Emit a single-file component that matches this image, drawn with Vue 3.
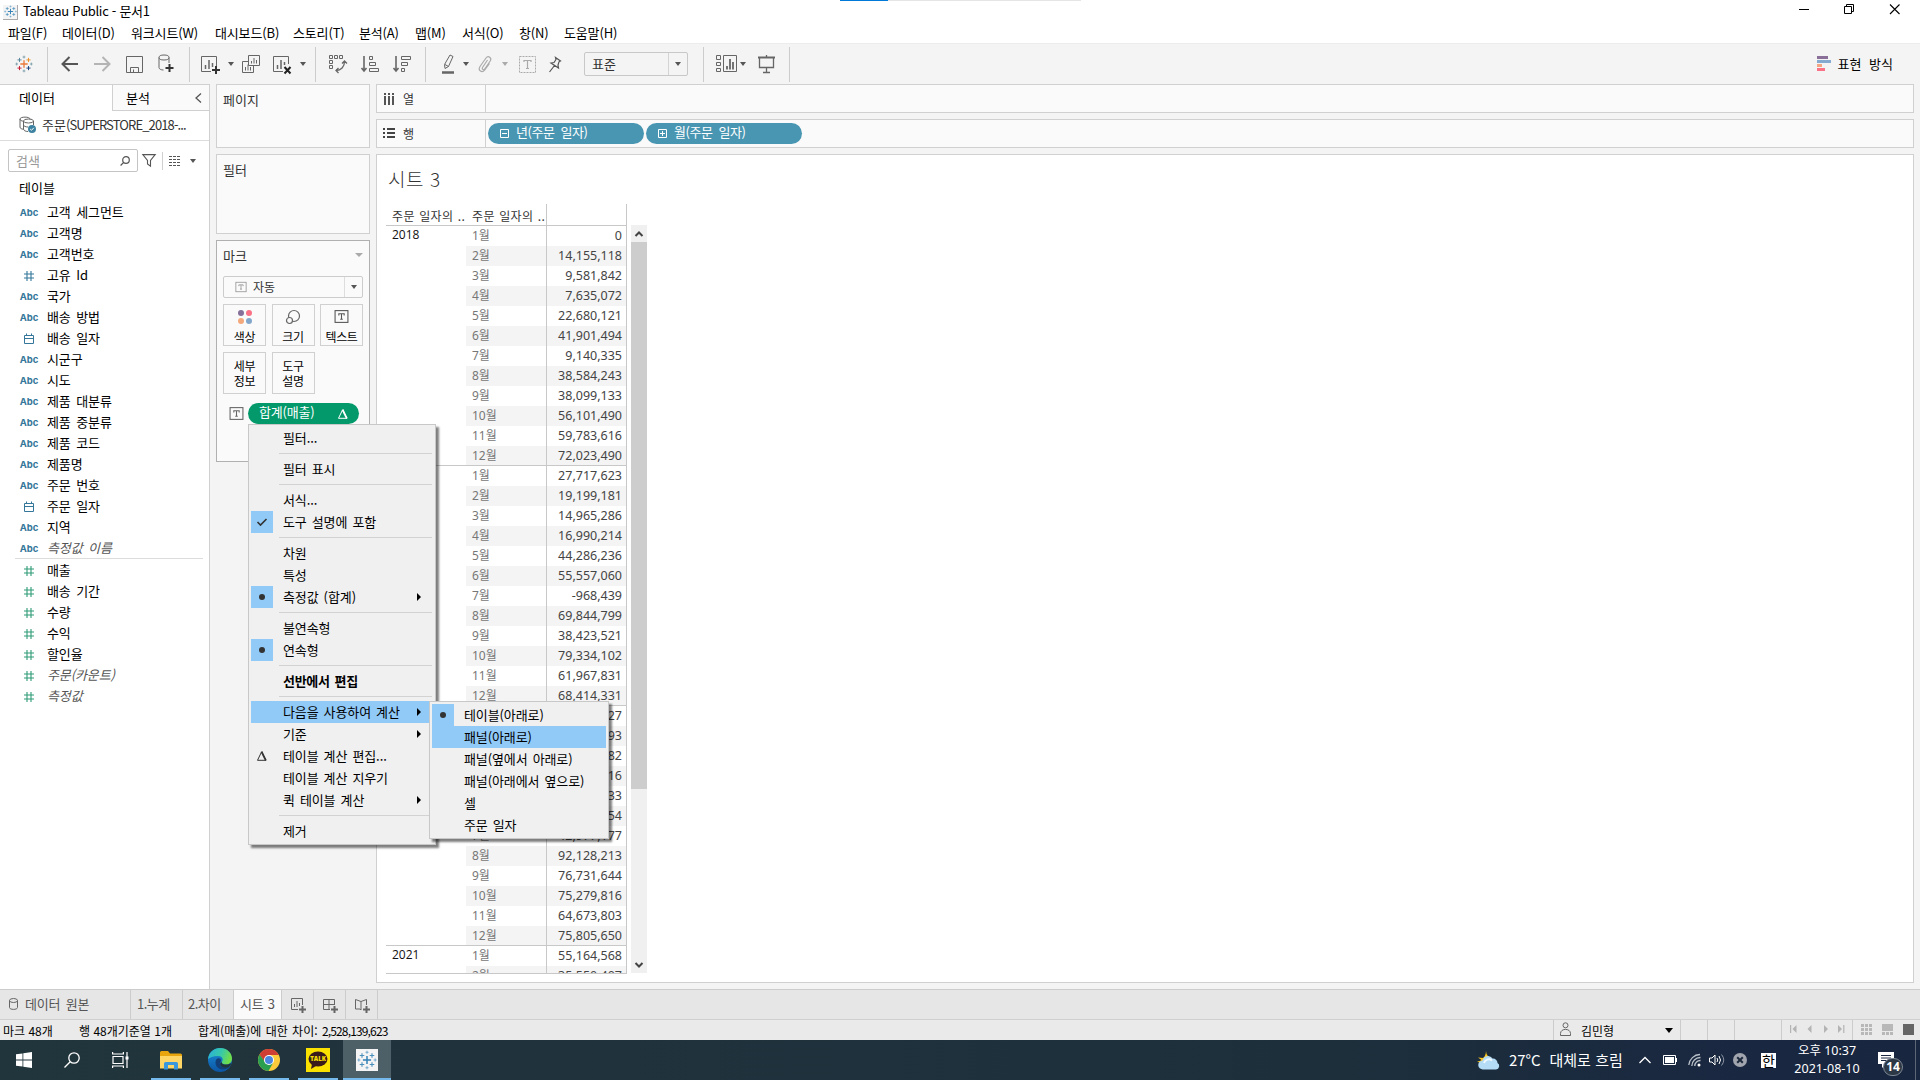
<script setup>
const menus = [
  ['파일(F)', 54], ['데이터(D)', 69], ['워크시트(W)', 84], ['대시보드(B)', 78], ['스토리(T)', 66],
  ['분석(A)', 56], ['맵(M)', 47], ['서식(O)', 57], ['창(N)', 45], ['도움말(H)', 70],
]

const dimensions = [
  ['abc', '고객 세그먼트'], ['abc', '고객명'], ['abc', '고객번호'], ['num', '고유 Id'], ['abc', '국가'],
  ['abc', '배송 방법'], ['date', '배송 일자'], ['abc', '시군구'], ['abc', '시도'], ['abc', '제품 대분류'],
  ['abc', '제품 중분류'], ['abc', '제품 코드'], ['abc', '제품명'], ['abc', '주문 번호'], ['date', '주문 일자'],
  ['abc', '지역'], ['abc', '측정값 이름', true],
]
const measures = [
  ['num', '매출'], ['num', '배송 기간'], ['num', '수량'], ['num', '수익'], ['num', '할인율'],
  ['num', '주문(카운트)', true], ['num', '측정값', true],
]

const years = [
  { year: '2018', values: ['0', '14,155,118', '9,581,842', '7,635,072', '22,680,121', '41,901,494', '9,140,335', '38,584,243', '38,099,133', '56,101,490', '59,783,616', '72,023,490'] },
  { year: '2019', values: ['27,717,623', '19,199,181', '14,965,286', '16,990,214', '44,286,236', '55,557,060', '-968,439', '69,844,799', '38,423,521', '79,334,102', '61,967,831', '68,414,331'] },
  { year: '2020', values: ['42,318,127', '37,204,593', '40,115,682', '39,870,416', '68,219,233', '81,403,954', '42,977,177', '92,128,213', '76,731,644', '75,279,816', '64,673,803', '75,805,650'] },
  { year: '2021', values: ['55,164,568', '35,550,407'] },
]

const menuItems = [
  { t: '필터...' }, { sep: 1 },
  { t: '필터 표시' }, { sep: 1 },
  { t: '서식...' }, { t: '도구 설명에 포함', mark: 'check' }, { sep: 1 },
  { t: '차원' }, { t: '특성' }, { t: '측정값 (합계)', mark: 'dot', sub: 1 }, { sep: 1 },
  { t: '불연속형' }, { t: '연속형', mark: 'dot' }, { sep: 1 },
  { t: '선반에서 편집', bold: 1 }, { sep: 1 },
  { t: '다음을 사용하여 계산', sub: 1, on: 1 }, { t: '기준', sub: 1 },
  { t: '테이블 계산 편집...', mark: 'delta' }, { t: '테이블 계산 지우기' }, { t: '퀵 테이블 계산', sub: 1 }, { sep: 1 },
  { t: '제거' },
]
const subItems = [
  { t: '테이블(아래로)', mark: 'dot' }, { t: '패널(아래로)', on: 1 }, { t: '패널(옆에서 아래로)' },
  { t: '패널(아래에서 옆으로)' }, { t: '셀' }, { t: '주문 일자' },
]
</script>

<template>
  <div class="app" lang="ko">
    <svg width="0" height="0" class="defs">
      <symbol id="tableau" viewBox="0 0 22 22">
        <path d="M11 6.5v9M6.5 11h9" stroke="var(--a)" stroke-width="1.6" />
        <path d="M5.5 3.5v5M3 6h5" stroke="var(--b)" stroke-width="1.2" />
        <path d="M16.500 3.500v5M14 6h5" stroke="var(--c)" stroke-width="1.2" />
        <path d="M5.500 13.500v5M3 16h5" stroke="var(--d)" stroke-width="1.2" />
        <path d="M16.500 13.500v5M14 16h5" stroke="var(--e)" stroke-width="1.2" />
        <path d="M11 .8v3.400M9.300 2.500h3.400M11 17.800v3.400M9.300 19.500h3.400M2 9.300v3.400M.5 11h3.200M20 9.300v3.400M18.300 11h3.200" stroke="var(--f)" stroke-width="1" />
      </symbol>
      <symbol id="tbox" viewBox="0 0 14 14">
        <rect x="1" y="1.500" width="12" height="11" fill="none" stroke="currentColor" />
        <path d="M4.500 6V4.500h5V6M7 4.500v5M5.800 9.500h2.400" fill="none" stroke="currentColor" />
      </symbol>
      <symbol id="delta" viewBox="0 0 12 12">
        <path d="M5.500 2L1.500 10.300h8.500z" fill="none" stroke="currentColor" stroke-width="1" /><path d="M5.500 1.500l4.300 8.800" fill="none" stroke="currentColor" stroke-width="1.800" />
      </symbol>
      <symbol id="num" viewBox="0 0 12 12"><path d="M4 1v10M8 1v10M1 4h10M1 8h10" stroke="currentColor" stroke-width="1.100" /></symbol>
      <symbol id="date" viewBox="0 0 12 12"><path d="M1.500 2.500h9v8h-9zM1.500 5.500h9M3.500 .5v2M8.500 .5v2" fill="none" stroke="currentColor" /></symbol>
    </svg>

    <header class="titlebar">
      <span class="progress"><i></i></span>
      <span class="logo-box"><svg class="mono" width="13" height="13"><use href="#tableau" /></svg></span>
      <span class="title">Tableau Public - 문서1</span>
      <svg class="winbtns" width="104" height="14" fill="none" stroke="#000">
        <path d="M1 6.500h10" /><path d="M46.500 3.500h7v7h-7zM48.500 3.500v-2h7v7h-2" /><path d="M92 1.500l9.500 9.500M101.500 1.500L92 11" stroke-width="1.100" />
      </svg>
    </header>
    <nav class="menubar"><span v-for="m in menus" :key="m[0]" :style="{ width: m[1] + 'px' }">{{ m[0] }}</span></nav>

    <div class="toolbar">
      <div class="grp g1"><svg class="color" width="18" height="18"><use href="#tableau" /></svg></div>
      <div class="grp g2">
        <b><svg width="18" height="16" fill="none" stroke="#555" stroke-width="2"><path d="M17 8H2M8.500 1L1.500 8l7 7" /></svg></b>
        <b><svg width="18" height="16" fill="none" stroke="#b4b4b4" stroke-width="2"><path d="M1 8h15M9.500 1l7 7-7 7" /></svg></b>
        <b><svg width="17" height="17" fill="none" stroke="#666"><path d="M.5.5h16v16H.5z" /><path d="M4.500 16.500v-5h8v5M7.500 13.500v3" /></svg></b>
        <b><svg width="16" height="20" fill="none" stroke="#666"><ellipse cx="6" cy="3.500" rx="5" ry="2.500" /><path d="M1 3.500v10c0 1.500 2 2.500 4.500 2.500M11 3.500V9" /><path d="M11.500 10v8M7.500 14h8" stroke="#333" stroke-width="2" /></svg></b>
      </div>
      <div class="grp g3">
        <b><svg width="20" height="19" fill="none" stroke="#666"><path d="M10 16.500H.5V1.500h15V11" /><path d="M4.500 14V10M8 14V5M11.500 12V8" stroke-width="1.500" /><path d="M15 11v8M11 15h8" stroke="#333" stroke-width="2" /></svg></b>
        <em></em>
        <b><svg width="18" height="18" fill="none" stroke="#666"><path d="M6.500.5h11v10h-11zM6 6.500H.5v11h11V11" /><path d="M9.500 8.500V6M12 8.500V3M14.500 8.500V5M3.500 15.500V12M6 15.500V9.500M8.500 15.500V12" /></svg></b>
        <b><svg width="20" height="19" fill="none" stroke="#666"><path d="M10 16.500H.5V1.500h15V9" /><path d="M4.500 14V10M8 14V5M11.500 10V7" stroke-width="1.500" /><path d="M11.500 12l6 6.500M17.500 12l-6 6.500" stroke="#222" stroke-width="2" /></svg></b>
        <em></em>
      </div>
      <div class="grp g4">
        <b><svg width="18" height="18" fill="none" stroke="#666"><path d="M.5.500h3v3h-3zM5.500.500h3v3h-3zM10.500.500h3v3h-3zM.5 5.500h3v3h-3zM.5 10.500h3v3h-3z" /><path d="M7 15.500C12 15.500 15.500 12 15.500 6.500M9.500 13L7 15.500 9.500 18M13 8.500l2.500-2.500L18 8.500" stroke-width="1.300" /></svg></b>
        <b><svg width="19" height="18" fill="none" stroke="#666"><path d="M3 1v15M.5 13L3 16l2.500-3" stroke-width="1.600" /><path d="M8.500 1.500h3v3h-3zM8.500 7.500h6v3h-6zM8.500 13.500h9v3h-9z" /></svg></b>
        <b><svg width="19" height="18" fill="none" stroke="#666"><path d="M3 1v15M.5 13L3 16l2.500-3" stroke-width="1.600" /><path d="M8.500 1.500h9v3h-9zM8.500 7.500h6v3h-6zM8.500 13.500h3v3h-3z" /></svg></b>
      </div>
      <div class="grp g5">
        <b><svg width="14" height="20" fill="none" stroke="#666"><path d="M9 1l3 1.500-4.500 10-3.500 2-.5-4z M4 10.500l3.500 2" /><path d="M1 18.500h12" stroke-width="2.500" /></svg></b>
        <em></em>
        <b><svg width="14" height="18" fill="none" stroke="#aaa" stroke-width="1.200"><path d="M9.500 5l-5 7.500c-1 1.700 1.200 3 2.200 1.500l5.500-8c2-3.200-2-6-4.200-3L2 11.500C-.5 15.500 4 18.500 6.800 15l4.700-6.500" /></svg></b>
        <em class="off"></em>
        <b><svg width="17" height="17" fill="none" stroke="#aaa"><path d="M.5.500h16v16H.5z" stroke-dasharray="2 1" /><path d="M5 6V4.500h7V6M8.500 4.500v8M7 12.500h3" stroke-width="1.200" /></svg></b>
        <b><svg width="14" height="17" fill="none" stroke="#555" stroke-width="1.200"><path d="M7.500 1.500l5 3.500-1.500.8L10 9l.5 3L3 7l3-.5 2-3zM6.500 9.500L1.500 16" /></svg></b>
        <div class="fit"><span>표준</span><i><em></em></i></div>
      </div>
      <div class="grp g6">
        <b><svg width="21" height="18" fill="none" stroke="#666"><path d="M.5.500h4v4h-4zM.5 7.500h4v3h-4zM.5 13.500h4v3h-4zM7.500.500h13v16h-13z" /><path d="M11 14.500V11M14 14.500V4M17 14.500V7" stroke-width="1.800" /></svg></b>
        <em></em>
        <b><svg width="17" height="19" fill="none" stroke="#666"><path d="M0 2.500h17" stroke-width="2" /><path d="M1.500 3v9.500h14V3M8.500 0v2M8.500 12.500v5M5 17.500h7" stroke-width="1.300" /></svg></b>
      </div>
      <div class="showme">
        <svg width="14" height="15"><path fill="#8a6f98" d="M0 0h11v3H0z" /><path fill="#85a9cf" d="M0 4h14v3H0z" /><path fill="#f4a582" d="M0 8h5v3H0z" /><path fill="#fb7185" d="M0 12h8v3H0z" /></svg>
        <span>표현 방식</span>
      </div>
    </div>

    <main class="work">
      <aside class="side">
        <div class="side-tabs"><span class="t1">데이터</span><span class="t2">분석<svg width="7" height="10" fill="none" stroke="#555" stroke-width="1.300"><path d="M6 .5L1 5l5 4.500" /></svg></span></div>
        <div class="source">
          <svg width="18" height="18" fill="none" stroke="#666"><path d="M11 3C11 .5 1 .5 1 3v8c0 1.500 1.500 2 3 2.200M1 3c0 1.500 1.500 2 3.500 2.200" /><ellipse cx="9.500" cy="5" rx="5" ry="2" /><path d="M4.500 5v8c0 1.500 2 2.500 4.500 2.500M14.500 5v4M4.500 9c0 1 2 2 4.500 2" /><circle cx="13" cy="13" r="4" fill="#3d82a0" stroke="none" /><path d="M11.200 13l1.300 1.300 2.300-2.500" stroke="#fff" /></svg>
          <span>주문<u>(SUPERSTORE_2018-...</u></span>
        </div>
        <div class="search">
          <div class="box"><span>검색</span><svg width="10" height="10" fill="none" stroke="#555" stroke-width="1.200"><circle cx="6" cy="4" r="3.300" /><path d="M3.700 6.300L.6 9.500" /></svg></div>
          <svg class="funnel" width="14" height="13" fill="none" stroke="#555" stroke-width="1.100"><path d="M.8.600h12.400L8.500 6.500v5.700L5.500 10V6.500z" /></svg>
          <i></i>
          <svg width="12" height="10" stroke="#555" stroke-dasharray="3 1"><path d="M0 .5h12M0 3.500h12M0 6.500h12M0 9.500h12" /></svg>
          <em></em>
        </div>
        <div class="tables-h">테이블</div>
        <ul class="fields dims">
          <li v-for="f in dimensions" :key="f[1]"><span class="ic"><template v-if="f[0] === 'abc'">Abc</template><svg v-else width="12" height="12"><use :href="'#' + f[0]" /></svg></span><span :class="{ it: f[2] }">{{ f[1] }}</span></li>
        </ul>
        <ul class="fields meas">
          <li v-for="f in measures" :key="f[1]"><span class="ic"><svg width="12" height="12"><use :href="'#' + f[0]" /></svg></span><span :class="{ it: f[2] }">{{ f[1] }}</span></li>
        </ul>
      </aside>

      <section class="cards">
        <div class="card pages">페이지</div>
        <div class="card filters">필터</div>
        <div class="card marks">
          <div class="mh"><span>마크</span><em></em></div>
          <div class="mtype"><svg width="12" height="12" color="#999"><use href="#tbox" /></svg><span>자동</span><i><em></em></i></div>
          <div class="mgrid">
            <div><svg width="16" height="16"><circle cx="4" cy="4" r="3" fill="#86709a" /><circle cx="12" cy="4" r="3" fill="#fb7185" /><circle cx="4" cy="12" r="3" fill="#f4a97d" /><circle cx="12" cy="12" r="3" fill="#83a6cb" /></svg><span>색상</span></div>
            <div><svg width="16" height="16" fill="none" stroke="#666" stroke-width="1.200"><circle cx="9" cy="7" r="5.500" /><circle cx="4.500" cy="11.500" r="3" fill="#fafafa" /></svg><span>크기</span></div>
            <div><svg width="15" height="15" color="#555"><use href="#tbox" /></svg><span>텍스트</span></div>
            <div class="two"><span>세부<br>정보</span></div>
            <div class="two"><span>도구<br>설명</span></div>
          </div>
          <div class="mpill"><svg width="15" height="15" color="#666"><use href="#tbox" /></svg><div class="pill green"><span>합계(매출)</span><svg width="12" height="12"><use href="#delta" /></svg></div></div>
        </div>
      </section>

      <section class="view">
        <div class="shelf"><div class="sl"><svg width="12" height="13" stroke="#555" stroke-width="2"><path d="M2 1v2M2 4v9M6 1v2M6 4v9M10 1v2M10 4v9" /></svg>열</div></div>
        <div class="shelf"><div class="sl"><svg width="12" height="11" stroke="#444" stroke-width="2"><path d="M0 1h2M0 5h2M0 9h2M4 1h8M4 5h8M4 9h8" /></svg>행</div>
          <div class="pill blue"><svg width="9" height="9" fill="none" stroke="#fff"><path d="M.5.500h8v8h-8zM2 4.500h5" /></svg><span>년(주문 일자)</span></div>
          <div class="pill blue"><svg width="9" height="9" fill="none" stroke="#fff"><path d="M.5.500h8v8h-8zM2 4.500h5M4.500 2v5" /></svg><span>월(주문 일자)</span></div>
        </div>
        <div class="sheet">
          <h1>시트 3</h1>
          <div class="viz">
            <div class="table">
              <div class="thead"><span class="y">주문 일자의 ..</span><span class="m">주문 일자의 ..</span><span class="v"></span></div>
              <div class="tbody">
                <div v-for="y in years" :key="y.year" class="yr">
                  <div class="y">{{ y.year }}</div>
                  <div class="rows"><div v-for="(v, i) in y.values" :key="i" class="row"><span class="m">{{ i + 1 }}월</span><span class="v">{{ v }}</span></div></div>
                </div>
              </div>
            </div>
            <div class="scroll">
              <span><svg width="8" height="6" fill="none" stroke="#444" stroke-width="2"><path d="M.5 5L4 1.500 7.500 5" /></svg></span>
              <i></i>
              <span class="dn"><svg width="8" height="6" fill="none" stroke="#444" stroke-width="2"><path d="M.5 1L4 4.500 7.500 1" /></svg></span>
            </div>
          </div>
        </div>
      </section>
    </main>

    <div class="tabs">
      <div class="tab src"><svg width="9" height="12" fill="none" stroke="#666"><ellipse cx="4.500" cy="2.500" rx="4" ry="2" /><path d="M.5 2.500v7c0 2.500 8 2.500 8 0v-7" /></svg><span>데이터 원본</span></div>
      <div class="tab n1">1.누계</div><div class="tab n2">2.차이</div><div class="tab cur">시트 3</div>
      <div class="tab add"><svg width="16" height="16" fill="none" stroke="#666"><path d="M7 11.500H.5V.5h11V7M3.500 9V6M6 9V3M8.500 8V5" /><path d="M11.500 8v7M8 11.500h7" stroke-width="2" /></svg></div>
      <div class="tab add"><svg width="16" height="16" fill="none" stroke="#666"><path d="M7 11.500H.5V1.500h11V7M.5 6.500h11M6 1.500v10" /><path d="M11.500 8v7M8 11.500h7" stroke-width="2" /></svg></div>
      <div class="tab add"><svg width="16" height="16" fill="none" stroke="#666"><path d="M6 12l-1-1H.5V1.500L6 3.500l5.500-2V7M6 3.500V12" /><path d="M11.500 8v7M8 11.500h7" stroke-width="2" /></svg></div>
    </div>

    <div class="status">
      <span class="s1">마크 48개</span><span class="s2">행 48개기준열 1개</span><span class="s3">합계(매출)에 대한 차이: <u>2,528,139,623</u></span>
      <div class="cell user"><svg width="11" height="14" fill="none" stroke="#666"><circle cx="5.500" cy="3.300" r="2.500" /><path d="M.5 13.500v-2c0-5.500 10-5.500 10 0v2z" /></svg><span>김민형</span><em></em></div>
      <div class="cell e1"></div><div class="cell e1"></div><div class="cell e2"></div>
      <div class="cell nav"><svg width="56" height="8" fill="#b4b4b4"><path d="M0 0h1.200v8H0zM6.500 0v8l-4-4zM21.500 0v8l-4-4zM34 0v8l4-4zM48 0v8l4-4zM53.200 0h1.200v8h-1.200z" /></svg></div>
      <div class="cell views"><svg width="54" height="11"><path d="M0 0h3v3H0zM4 0h3v3H4zM8 0h3v3H8zM0 4h3v3H0zM4 4h3v3H4zM8 4h3v3H8zM0 8h3v3H0zM4 8h3v3H4zM8 8h3v3H8zM21 0h11v7H21zM21 8h3v3h-3zM25 8h3v3h-3zM29 8h3v3h-3z" fill="#b8b8b8" /><path d="M42 0h11v11H42z" fill="#666" /></svg></div>
    </div>

    <footer class="taskbar">
      <div class="tk"><svg width="16" height="16" fill="#fff"><path d="M0 2.300l6.500-.9v6.200H0zM7.300 1.200L16 0v7.600H7.300zM0 8.400h6.500v6.200L0 13.700zM7.300 8.400H16V16l-8.700-1.200z" /></svg></div>
      <div class="tk"><svg width="16" height="16" fill="none" stroke="#fff" stroke-width="1.300"><circle cx="10" cy="6" r="5.200" /><path d="M6.200 9.800L.5 15.500" /></svg></div>
      <div class="tk"><svg width="17" height="16" fill="none" stroke="#fff" stroke-width="1.200"><path d="M1 4.500h10v7H1zM.6 0v2h10.800V0M.6 16v-2h10.800v2M15 0v16" /><path d="M13.500 4.500h3v3h-3z" fill="#fff" stroke="none" /></svg></div>
      <div class="tk run first"><svg width="22" height="19"><path d="M0 1.500Q0 0 1.500 0H8l2 2.500h10.500Q22 2.500 22 4v12H0z" fill="#e9a50e" /><path d="M0 5h22v12.500H0z" fill="#ffd666" /><path d="M4 18.500v-6Q4 11 5.500 11h11q1.500 0 1.500 1.500v6h-4V14H8v4.500z" fill="#3b97dc" /></svg></div>
      <div class="tk run"><svg width="24" height="24"><defs><linearGradient id="eg" x1="0" y1="0" x2="1" y2=".3"><stop offset="0" stop-color="#28afdc" /><stop offset=".6" stop-color="#38c9a8" /><stop offset="1" stop-color="#6fdc4c" /></linearGradient><linearGradient id="eb" x1="0" y1="0" x2="0" y2="1"><stop offset="0" stop-color="#1b8fd8" /><stop offset="1" stop-color="#0b55a4" /></linearGradient></defs><circle cx="12" cy="12" r="12" fill="url(#eb)" /><path d="M0 11C1 4 6 0 12 0c7 0 12 5 12 10.500 0 4-3 6-6 6-3.500 0-5-1.500-4-3 1.500-2 .5-5.500-4-5.500C5 8 1.500 9.500 0 11z" fill="url(#eg)" /><path d="M8 12c-2 5 2 9.500 7 9.500 3 0 5-1 7-3-3 2-7 1.500-9-.5-1.700-1.700-1.500-3 0-5 .500-3-3.500-4-5-1z" fill="#123f78" /><path d="M14 13.500c-1 1.500.5 3 4 3 1.500 0 3.500-.5 4.500-1.500l.5 2-2.500 2.300c-3 1.200-6 .2-7.500-1.300-1.500-1.700-1-3.500 1-4.500z" fill="#21343c" /></svg></div>
      <div class="tk run"><svg width="22" height="22"><circle cx="11" cy="11" r="11" fill="#fbcb3c" /><path d="M11 6h9.800A11 11 0 0 0 1.500 5.500L6.500 13z" fill="#cf3e35" /><path d="M1.500 5.500A11 11 0 0 0 10.500 22L15 14 7 13z" fill="#2a9f50" /><circle cx="11" cy="11" r="5" fill="#fff" /><circle cx="11" cy="11" r="4" fill="#4a86e0" /></svg></div>
      <div class="tk run"><span class="kakao"><svg width="24" height="24"><ellipse cx="12" cy="11" rx="9.500" ry="7.500" fill="#391b1b" /><path d="M6 16l-1 5 5-3z" fill="#391b1b" /></svg><b>TALK</b></span></div>
      <div class="tk run active"><span class="tbl"><svg class="mono" width="20" height="20"><use href="#tableau" /></svg></span></div>
      <div class="tray">
        <svg class="wx" width="23" height="19"><path d="M9 0a7.500 7.500 0 0 0 6 7L8 14 0 10.500c2-.2 3.500-.8 4.500-1.500L1 6.500l5 .5Q9 4.500 9 0z" fill="#ffc61a" /><path d="M6 18.500a4.500 4.500 0 0 1-.500-9 5.500 5.500 0 0 1 10-2 4.500 4.500 0 0 1 5 4.500 3.500 3.500 0 0 1-1.500 6.500z" fill="#b5dcf7" /><path d="M7 12a5 5 0 0 1 8-2.500" stroke="#eef8ff" fill="none" stroke-width="2" /></svg>
        <span class="wt">27°C&nbsp; 대체로 흐림</span>
        <svg class="ch" width="12" height="8" fill="none" stroke="#fff" stroke-width="1.300"><path d="M.5 7L6 1.500 11.500 7" /></svg>
        <svg class="bt" width="15" height="10" fill="none" stroke="#fff"><path d="M.5.500h12v9H.5zM13.500 3v4" /><path d="M2 2h9v6H2z" fill="#fff" stroke="none" /></svg>
        <svg class="wf" width="13" height="14" fill="none" stroke="#b9c0c9" stroke-width="1.300"><path d="M.8 12A11.500 11.500 0 0 1 12 1.500M3.800 13A8.500 8.500 0 0 1 12.500 4.500M6.800 13A5.500 5.500 0 0 1 12.500 7.500" /><circle cx="11" cy="12" r="1.500" fill="#fff" stroke="none" /></svg>
        <svg class="vo" width="16" height="14" fill="none" stroke="#fff"><path d="M.5 5h2.500l3-3v10L3 9H.5zM8 5q1.500 2 0 4M10 3q3 4 0 8" /><path d="M12.500 1.500q4.500 5.500 0 11" stroke="#8a93a3" /></svg>
        <svg class="xx" width="14" height="14"><circle cx="7" cy="7" r="7" fill="#a0a5ae" /><path d="M4.200 4.200l5.600 5.600M9.800 4.200L4.200 9.800" stroke="#1c2a3c" stroke-width="2" /></svg>
        <span class="ime">한</span>
        <span class="clock"><span>오후 10:37</span><span>2021-08-10</span></span>
        <span class="noti"><svg width="17" height="17"><path d="M0 0h16v12H8l-4 4v-4H0z" fill="#fff" /><path d="M3 3.500h10M3 6h10M3 8.500h7" stroke="#1a2840" /></svg><b>14</b></span>
        <i class="peek"></i>
      </div>
    </footer>

    <div class="ctx main-menu">
      <template v-for="(m, i) in menuItems" :key="i">
        <div v-if="m.sep" class="sep"></div>
        <div v-else class="mi" :class="{ on: m.on, bold: m.bold }">
          <span class="mk" :class="{ box: m.mark === 'check' || m.mark === 'dot' }">
            <svg v-if="m.mark === 'check'" width="10" height="8" fill="none" stroke="#333" stroke-width="1.600"><path d="M.5 4l3 3L9.500 1" /></svg>
            <i v-if="m.mark === 'dot'"></i>
            <svg v-if="m.mark === 'delta'" width="12" height="12" color="#333"><use href="#delta" /></svg>
          </span>
          <span class="tx">{{ m.t }}</span><s v-if="m.sub"></s>
        </div>
      </template>
    </div>
    <div class="ctx sub-menu">
      <div v-for="m in subItems" :key="m.t" class="mi" :class="{ on: m.on }"><span class="mk" :class="{ box: m.mark }"><i v-if="m.mark"></i></span><span class="tx">{{ m.t }}</span></div>
    </div>
  </div>
</template>

<style>
body { margin: 0; overflow: hidden; }
</style>
<style scoped>
* { box-sizing: border-box; }
.app { position: relative; width: 1920px; height: 1080px; overflow: hidden; display: flex; flex-direction: column; background: #f4f4f4; font: 13px/20px "Noto Sans CJK KR", "Noto Sans", sans-serif; color: #000; white-space: nowrap; }
.defs { position: absolute; }
svg { display: block; flex: none; overflow: visible; }
u { text-decoration: none; }
em { display: block; flex: none; width: 0; height: 0; border: 3px solid transparent; border-top: 4px solid #555; border-bottom: 0; }
.mono { --a: #2f7fb5; --b: #4a90bd; --c: #4a90bd; --d: #4a90bd; --e: #4a90bd; --f: #6aa5cb; }
.color { --a: #eb7a3c; --b: #5b879b; --c: #eb9129; --d: #c72037; --e: #1f447e; --f: #7199a6; }

.titlebar { flex: none; height: 23px; background: #fff; display: flex; align-items: center; position: relative; padding: 1px 0 0 3px; }
.progress { position: absolute; left: 840px; top: 0; width: 241px; height: 1px; background: #e5e5e5; }
.progress i { display: block; width: 48px; height: 1px; background: #0078d7; }
.logo-box { width: 15px; height: 15px; background: #f4f4f4; display: grid; place-items: center; border-right: 1px solid #aaa; border-bottom: 1px solid #aaa; }
.title { margin-left: 5px; letter-spacing: -.3px; position: relative; top: -1px; }
.winbtns { margin-left: auto; margin-right: 18px; position: relative; top: -2px; }
.menubar { flex: none; height: 20px; background: #fff; display: flex; padding-left: 8px; letter-spacing: -.15px; }
.menubar span { flex: none; }

.toolbar { flex: none; height: 41px; background: #f4f4f4; border-top: 1px solid #ececec; display: flex; align-items: center; }
.grp { flex: none; height: 35px; display: flex; align-items: center; border-right: 1px solid #ccc; }
.grp b { flex: none; width: 32px; display: grid; place-items: center; font-weight: normal; }
.g1 { width: 48px; justify-content: center; }
.g2 { width: 142px; padding-left: 6px; }
.g3 { width: 126px; padding-left: 5px; }
.g3 em { margin: 0 1px; }
.g4 { width: 110px; padding-left: 6px; }
.g5 { width: 278px; padding-left: 8px; }
.g5 b, .g6 b { width: 28px; }
.g5 > em { margin: 0 2px 0 1px; }
.g5 > em.off { border-top-color: #aaa; margin: 0 5px 0 3px; }
.fit { display: flex; margin-left: 15px; width: 104px; height: 24px; border: 1px solid #c8c8c8; border-radius: 2px; padding-left: 7px; align-items: center; color: #333; }
.fit i { margin-left: auto; width: 19px; height: 100%; border-left: 1px solid #d4d4d4; display: grid; place-items: center; }
.g6 { width: 86px; padding-left: 8px; }
.g6 em { margin: 0 6px 0 0; }
.showme { margin-left: auto; display: flex; align-items: center; gap: 7px; padding-right: 27px; word-spacing: 4px; }
.showme svg { position: relative; top: -1px; }

.work { flex: none; height: 905px; display: flex; gap: 6px; }
.side { width: 210px; height: 905px; background: #fff; border-right: 1px solid #d0d0d0; border-top: 1px solid #d0d0d0; }
.side-tabs { display: flex; height: 26px; line-height: 25px; }
.t1 { width: 112px; padding-left: 19px; }
.t2 { flex: 1; display: flex; align-items: center; justify-content: space-between; padding: 0 7px 0 13px; background: #fafafa; border-left: 1px solid #d0d0d0; border-bottom: 1px solid #d0d0d0; }
.source { height: 30px; border-bottom: 1px solid #dcdcdc; padding: 0 0 2px 19px; display: flex; align-items: center; gap: 5px; color: #333; }
.source u { letter-spacing: -.88px; }
.search { display: flex; align-items: center; margin: 8px 0 0 8px; height: 23px; }
.search .box { width: 130px; height: 23px; border: 1px solid #c4c4c4; border-radius: 2px; display: flex; align-items: center; justify-content: space-between; padding: 0 7px; color: #999; }
.funnel { margin: 0 6px 0 4px; }
.search i { width: 1px; height: 18px; background: #d0d0d0; margin-right: 6px; }
.search em { margin-left: 9px; border-width: 4px 3.500px 0; }
.tables-h { margin: 6px 0 3px 19px; line-height: 20px; }
ul { list-style: none; margin: 0; padding: 0; }
.fields li { height: 21px; line-height: 21px; display: flex; align-items: center; word-spacing: 2px; letter-spacing: -.1px; }
.ic { width: 28px; margin: 0 4px 0 15px; display: grid; place-items: center; color: #35779a; font: bold 9.500px/21px Inter, sans-serif; position: relative; top: 1px; }
.dims { border-bottom: 1px solid #dcdcdc; margin: 0 6px 0 15px; }
.dims .ic { margin-left: 0; }
.meas .ic { color: #2f9b76; }
.it { font-style: italic; color: #555; }

.cards { width: 154px; display: flex; flex-direction: column; gap: 6px; }
.card { background: #fafafa; border: 1px solid #d0d0d0; padding: 5px 6px 0; color: #333; font-size: 13px; }
.pages { height: 64px; } .filters { height: 80px; } .marks { height: 222px; border-color: #b0b0b0; }
.mh { display: flex; justify-content: space-between; align-items: center; }
.mh em { border-top-color: #aaa; border-width: 4px 4px 0; margin-bottom: 2px; }
.mtype { margin-top: 10px; height: 22px; border: 1px solid #ccc; border-radius: 2px; display: flex; align-items: center; padding-left: 11px; font-size: 12px; }
.mtype span { margin-left: 6px; }
.mtype i { margin-left: auto; height: 100%; width: 18px; border-left: 1px solid #ddd; display: grid; place-items: center; }
.mtype em { border-width: 4px 3.500px 0; }
.mgrid { margin-top: 6px; display: grid; grid-template-columns: repeat(3, 43px); gap: 6px 5.500px; }
.mgrid div { height: 42px; border: 1px solid #d0d0d0; display: flex; flex-direction: column; align-items: center; justify-content: space-between; padding-top: 4px; font-size: 12px; line-height: 17px; color: #000; letter-spacing: -.4px; }
.mgrid .two { line-height: 15px; padding-top: 5px; }
.mpill { display: flex; align-items: center; margin: 9px 0 0 6px; gap: 4px; }
.pill { height: 21px; border-radius: 11px; color: #fff; display: flex; align-items: center; padding: 0 10px; font-size: 13px; line-height: 20px; }
.pill span { position: relative; top: -2px; }
.green { width: 111px; background: #04996a; justify-content: space-between; letter-spacing: -.2px; padding-left: 11px; }

.view { width: 1538px; display: flex; flex-direction: column; gap: 6px; }
.shelf { height: 29px; background: #fafafa; border: 1px solid #d0d0d0; display: flex; align-items: center; }
.sl { width: 109px; height: 100%; border-right: 1px solid #d0d0d0; display: flex; align-items: center; gap: 8px; padding-left: 6px; font-size: 12px; color: #333; }
.blue { width: 156px; background: #4996b2; margin-left: 2px; gap: 7px; padding-left: 12px; letter-spacing: -.4px; word-spacing: 2.500px; }
.sheet { height: 829px; background: #fff; border: 1px solid #d0d0d0; padding-left: 9px; }
h1 { margin: 12px 0 0 2px; font-weight: 300; font-size: 19px; line-height: 24px; color: #333; letter-spacing: .6px; }
.viz { display: flex; margin-top: 13px; }
.table { width: 241px; height: 770px; border-bottom: 1px solid #c8c8c8; }
.thead { display: flex; height: 22px; border-bottom: 1px solid #c8c8c8; font-size: 12px; line-height: 24px; color: #333; letter-spacing: .4px; word-spacing: .5px; }
.thead .y { width: 80px; padding-left: 6px; }
.thead .m { width: 80px; padding-left: 6px; }
.thead .v { width: 81px; border: solid #c8c8c8; border-width: 0 1px; }
.tbody { height: 747px; overflow: hidden; }
.yr { display: flex; width: 241px; position: relative; font: 12.500px/20px "Noto Sans", "Noto Sans CJK KR", sans-serif; }
.yr + .yr { box-shadow: 0 -1px 0 #c8c8c8; }
.yr .y { width: 80px; padding-left: 6px; line-height: 18px; color: #111; font-family: "Open Sans", sans-serif; font-size: 12px; }
.rows { flex: 1; }
.row { height: 20px; display: flex; }
.row:nth-child(even) { background: #f4f4f4; }
.row .m { width: 80px; padding-left: 6px; color: #777; font-size: 12px; line-height: 20px; }
.row .v { width: 81px; border: solid #c8c8c8; border-width: 0 1px; padding-right: 4px; text-align: right; color: #444; }
.scroll { width: 16px; height: 748px; margin: 21px 0 0 4px; background: #f0f0f0; display: flex; flex-direction: column; }
.scroll span { height: 17px; display: grid; place-items: center; }
.scroll i { height: 547px; background: #cdcdcd; }
.scroll .dn { margin-top: auto; }

.tabs { flex: none; height: 30px; background: #e6e6e6; border-top: 1px solid #ccc; display: flex; color: #555; line-height: 28px; }
.tab { border-right: 1px solid #ccc; display: flex; align-items: center; }
.tabs .tab { padding-bottom: 1px; }
.tab.src { width: 131px; padding-left: 9px; gap: 7px; word-spacing: 2px; letter-spacing: -.2px; }
.tab.n1 { width: 52px; padding-left: 6px; letter-spacing: -.5px; } .tab.n2 { width: 51px; padding-left: 5px; letter-spacing: -.5px; }
.tab.cur { width: 48px; background: #fafafa; padding-left: 6px; letter-spacing: -.3px; word-spacing: 1px; }
.tab.add { width: 32px; padding: 2px 0 0 9px; }
.status { flex: none; height: 21px; background: #eaeaea; border-top: 1px solid #d0d0d0; display: flex; font-size: 12px; line-height: 21px; }
.s1 { width: 76px; padding-left: 3px; } .s2 { width: 119px; padding-left: 3px; } .s3 { padding-left: 3px; margin-right: auto; word-spacing: 1px; }
.status u { letter-spacing: -.85px; }
.cell { height: 20px; border-left: 1px solid #ccc; display: flex; align-items: center; }
.user { width: 127px; padding: 0 7px 0 6px; gap: 10px; }
.user svg { position: relative; top: -1px; }
.user em { margin-left: auto; border-width: 5px 4px 0; border-top-color: #000; }
.e1 { width: 27px; } .e2 { width: 47px; } .nav { width: 71px; padding-left: 8px; padding-bottom: 2px; } .views { width: 68px; padding-left: 8px; padding-bottom: 1px; }

.taskbar { flex: none; height: 40px; background: linear-gradient(90deg, #21353c, #20323c 30%, #1d2f3b 70%, #192741 92%, #18263f); display: flex; color: #fff; }
.tk { width: 48px; height: 40px; display: grid; place-items: center; position: relative; }
.run { margin-right: 1px; }
.first { margin-left: 3px; }
.run::after { content: ""; position: absolute; left: 4px; right: 4px; bottom: 0; height: 2px; background: #76b9ed; }
.active { background: #4d6068; }
.active::after { left: 0; right: 0; }
.kakao { position: relative; width: 24px; height: 24px; background: #fae100; }
.kakao b { position: absolute; left: 0; right: 0; top: 5px; text-align: center; color: #fae100; font: 900 6px/12px "Open Sans", sans-serif; }
.tbl { width: 22px; height: 22px; background: #f4f4f4; display: grid; place-items: center; }
.tray { margin-left: auto; display: flex; align-items: center; width: 443px; }
.wt { margin-left: 9px; font-size: 15px; width: 114px; letter-spacing: -.1px; word-spacing: .5px; line-height: 40px; }
.ch { margin-left: 16px; } .bt { margin-left: 12px; } .wf { margin-left: 10px; } .vo { margin-left: 8px; } .xx { margin-left: 8px; }
.ime { margin-left: 14px; width: 15px; height: 15px; background: #fff; color: #000; font-size: 14px; line-height: 14px; text-align: center; }
.clock { width: 74px; margin-left: 14px; display: flex; flex-direction: column; align-items: center; font: 12.500px/18px "Noto Sans", "Noto Sans CJK KR", sans-serif; }
.noti { position: relative; margin-left: 14px; }
.noti b { position: absolute; left: 5px; top: 6px; width: 20px; height: 18px; border-radius: 9px; background: #2d3846; border: 1px solid #7d8794; font: bold 12px/16px "Open Sans", sans-serif; text-align: center; }
.peek { margin-left: auto; margin-right: 4px; width: 1px; height: 40px; background: #5d6675; }

.ctx { position: absolute; z-index: 5; background: #f0f0f0; border: 1px solid #c8c8c8; padding: 2px; box-shadow: 3px 3px 2px rgba(0, 0, 0, .5); word-spacing: 1.500px; letter-spacing: -.1px; }
.main-menu { left: 248px; top: 424px; width: 188px; height: 421px; }
.sub-menu { left: 429px; top: 701px; width: 180px; height: 138px; }
.mi { height: 22px; line-height: 22px; display: flex; align-items: center; }
.mk { width: 22px; height: 22px; display: grid; place-items: center; margin-right: 10px; }
.mk.box, .on { background: #91c9f7; }
.mk i { width: 6px; height: 6px; border-radius: 50%; background: #333; }
.mi.bold { font-weight: bold; letter-spacing: -.3px; }
.mi s { margin-left: auto; margin-right: 12px; border: 4px solid transparent; border-left: 4px solid #000; border-right: 0; }
.sep { height: 9px; padding: 4px 1px 0 28px; }
.sep::after { content: ""; display: block; height: 1px; background: #d2d2d2; }
</style>
